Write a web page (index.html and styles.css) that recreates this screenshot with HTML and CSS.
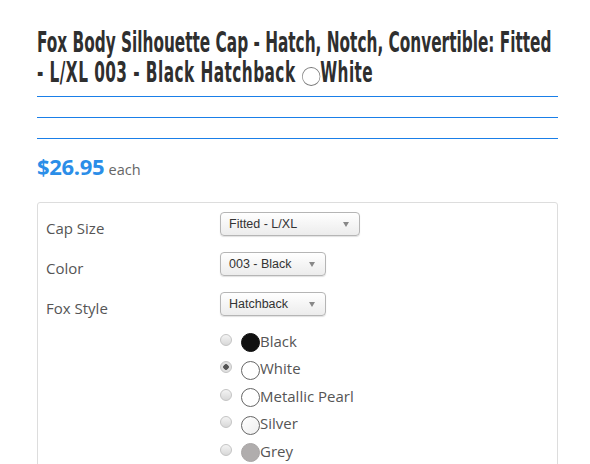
FILE: index.html
```html
<!DOCTYPE html>
<html>
<head>
<meta charset="utf-8">
<link rel="stylesheet" href="styles.css">
</head>
<body>
<div class="page">
  <div class="title-wrap">
    <h1 class="title">Fox Body Silhouette Cap - Hatch, Notch, Convertible: Fitted<br><span class="line2">- L/XL 003 - Black Hatchback <span class="swatch-title"></span>White</span></h1>
  </div>
  <div class="rule"></div>
  <div class="rule"></div>
  <div class="rule last"></div>
  <div class="price"><span class="amount">$26.95</span> <span class="each">each</span></div>
  <div class="options">
    <div class="opt-grid">
      <div class="label">Cap Size</div>
      <div class="select w-wide"><span>Fitted - L/XL</span><i class="arrow"></i></div>
      <div class="label">Color</div>
      <div class="select w-mid"><span>003 - Black</span><i class="arrow"></i></div>
      <div class="label">Fox Style</div>
      <div class="select w-mid"><span>Hatchback</span><i class="arrow"></i></div>
      <div></div>
      <ul class="radios">
        <li><span class="radio"></span><span class="swatch black"></span>Black</li>
        <li><span class="radio checked"></span><span class="swatch white"></span>White</li>
        <li><span class="radio"></span><span class="swatch white"></span>Metallic Pearl</li>
        <li><span class="radio"></span><span class="swatch silver"></span>Silver</li>
        <li><span class="radio"></span><span class="swatch grey"></span>Grey</li>
      </ul>
    </div>
  </div>
</div>
</body>
</html>
```
FILE: styles.css
```css
html, body {
  margin: 0;
  padding: 0;
  background: #fff;
}
.page {
  width: 521px;
  margin-left: 37px;
  padding-top: 28px;
  font-family: "Open Sans", "Noto Sans", sans-serif;
}
.title-wrap {
  height: 68px;
}
.title {
  margin: 0;
  width: 900px;
  font-family: "DejaVu Sans Condensed", "DejaVu Sans", sans-serif;
  font-stretch: condensed;
  font-weight: bold;
  font-size: 28px;
  line-height: 30px;
  color: #2f2f2f;
  transform: scaleX(0.608);
  transform-origin: 0 0;
}
.line2 {
  letter-spacing: 0.75px;
}
.swatch-title {
  display: inline-block;
  width: 30px;
  height: 19px;
  border: 1px solid #777;
  border-radius: 50%;
  vertical-align: -4px;
  box-sizing: border-box;
  margin-left: 1px;
}
.rule {
  height: 1px;
  background: #1a7fe8;
  margin-bottom: 20px;
}
.rule.last {
  margin-bottom: 16px;
}
.price {
  height: 47px;
  line-height: 22px;
  color: #666;
}
.amount {
  font-weight: bold;
  font-size: 22px;
  color: #2b8ee8;
  letter-spacing: -0.3px;
}
.each {
  font-size: 14.5px;
  color: #666;
}
.options {
  border: 1px solid #ddd;
  border-radius: 3px;
  padding: 9px 8px 0;
  height: 300px;
}
.opt-grid {
  display: grid;
  grid-template-columns: 174px 1fr;
  row-gap: 16px;
  align-items: end;
}
.label {
  font-size: 15px;
  color: #555;
  line-height: 20px;
  transform: translateY(2px);
}
.select {
  height: 24px;
  box-sizing: border-box;
  border: 1px solid #b5b5b5;
  border-radius: 4px;
  background: linear-gradient(#fff, #ececec);
  box-shadow: 0 1px 1px rgba(0,0,0,0.12);
  font-family: "Liberation Sans", Arial, sans-serif;
  font-size: 12.5px;
  color: #333;
  display: flex;
  align-items: center;
  padding: 0 8px;
  justify-content: space-between;
}
.w-wide { width: 140px; }
.w-mid { width: 106px; }
.arrow {
  width: 0;
  height: 0;
  border-left: 3.5px solid transparent;
  border-right: 3.5px solid transparent;
  border-top: 5px solid #888;
  margin-right: 2px;
}
.radios {
  list-style: none;
  margin: -5px 0 0;
  padding: 0;
}
.radios li {
  height: 27.5px;
  display: flex;
  align-items: center;
  font-size: 15px;
  color: #555;
}
.radio {
  width: 12px;
  height: 12px;
  box-sizing: border-box;
  border: 1px solid #c4c4c4;
  border-radius: 50%;
  background: linear-gradient(#f4f4f4, #d8d8d8);
  margin-right: 9px;
  position: relative;
  top: -1px;
}
.radio.checked {
  background: radial-gradient(circle, #555 0 2.5px, #e0e0e0 3px);
}
.swatch {
  width: 19px;
  height: 19px;
  box-sizing: border-box;
  border-radius: 50%;
  border: 1px solid #666;
  position: relative;
  top: 2px;
}
.swatch.black { background: #111; border-color: #111; }
.swatch.white { background: #fff; }
.swatch.silver { background: linear-gradient(135deg, #fff, #eee); }
.swatch.grey { background: #b0adad; border-color: #a9a6a6; }
```
